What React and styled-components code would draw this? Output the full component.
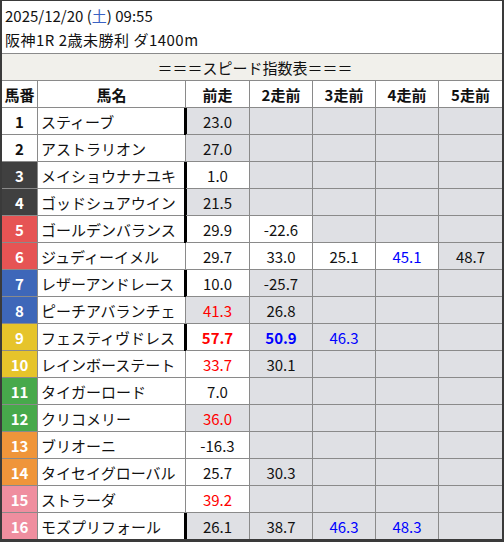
import styled, { createGlobalStyle } from "styled-components"

var GlobalStyle = createGlobalStyle`
  html, body {
    margin: 0;
    padding: 0;
    background: #ffffff;
  }
  body {
    font-family: "Noto Sans CJK JP", "Noto Sans", sans-serif;
    color: #111;
  }
`

var Frame = styled.div`
  width: 504px;
  height: 542px;
  box-sizing: border-box;
  border-style: solid;
  border-color: #3a3a3a;
  border-width: 1px 2px 3px 2px;
  background: #fff;
  overflow: hidden;
`

var Info = styled.div`
  height: 53px;
  box-sizing: border-box;
  border-bottom: 1px solid #8a8a8a;
  padding: 3px 0 0 3px;
  font-size: 15px;
  line-height: 24px;
`

var InfoLine = styled.div`
  letter-spacing: ${(p) => (p.wide ? "0.5px" : "0")};
`

var Sat = styled.span`
  color: #3a62c4;
`

var Title = styled.div`
  height: 27px;
  box-sizing: border-box;
  border-bottom: 1px solid #8a8a8a;
  background: #f1f0eb;
  display: flex;
  align-items: center;
  justify-content: center;
  font-size: 15px;
  padding-left: 6px;
`

var Grid = styled.div`
  display: grid;
  grid-template-columns: 36px 148px 64px 63px 63px 63px 63px;
  grid-auto-rows: 27px;
`

var Cell = styled.div`
  box-sizing: border-box;
  border-right: ${(p) => (p.last ? "none" : "1px solid #8a8a8a")};
  border-bottom: ${(p) => (p.bottom ? "none" : "1px solid #8a8a8a")};
  display: flex;
  align-items: center;
  justify-content: ${(p) => (p.left ? "flex-start" : "center")};
  padding-left: ${(p) => (p.left ? "3px" : "0")};
  font-size: 15px;
  white-space: nowrap;
  overflow: hidden;
`

var Head = styled(Cell)`
  font-weight: 700;
  background: #fff;
`

var Num = styled(Cell)`
  font-weight: 700;
  background: ${(p) => p.bg};
  color: ${(p) => p.fg};
`

var Value = styled(Cell)`
  overflow: visible;
  background: ${(p) => (p.gray ? "#dfe0e4" : "#fff")};
  color: ${(p) => (p.tone === "red" ? "#ff0000" : p.tone === "blue" ? "#0000ff" : "#111")};
  font-weight: ${(p) => (p.bold ? 700 : 400)};
  box-shadow: ${(p) => (p.mark ? "-2px 0 0 #000, inset 1px 0 0 #000" : "none")};
`

var waku = [
  ["#ffffff", "#111"],
  ["#ffffff", "#111"],
  ["#404040", "#fff"],
  ["#404040", "#fff"],
  ["#e65454", "#fff"],
  ["#e65454", "#fff"],
  ["#3e67b9", "#fff"],
  ["#3e67b9", "#fff"],
  ["#e6c42b", "#fff"],
  ["#e6c42b", "#fff"],
  ["#47a94b", "#fff"],
  ["#47a94b", "#fff"],
  ["#ef953a", "#fff"],
  ["#ef953a", "#fff"],
  ["#ef8e9f", "#fff"],
  ["#ef8e9f", "#fff"],
]

// v: value, w: white background, t: text tone, b: bold
var horses = [
  { name: "スティーブ", mark: true, runs: [{ v: "23.0" }] },
  { name: "アストラリオン", runs: [{ v: "27.0" }] },
  { name: "メイショウナナユキ", mark: true, runs: [{ v: "1.0", w: true }] },
  { name: "ゴッドシュアウイン", mark: true, runs: [{ v: "21.5" }] },
  { name: "ゴールデンバランス", mark: true, runs: [{ v: "29.9", w: true }, { v: "-22.6", w: true }] },
  {
    name: "ジュディーイメル",
    runs: [
      { v: "29.7", w: true },
      { v: "33.0", w: true },
      { v: "25.1", w: true },
      { v: "45.1", w: true, t: "blue" },
      { v: "48.7" },
    ],
  },
  { name: "レザーアンドレース", mark: true, runs: [{ v: "10.0", w: true }, { v: "-25.7" }] },
  { name: "ピーチアバランチェ", runs: [{ v: "41.3", t: "red" }, { v: "26.8" }] },
  {
    name: "フェスティヴドレス",
    mark: true,
    runs: [
      { v: "57.7", w: true, t: "red", b: true },
      { v: "50.9", t: "blue", b: true },
      { v: "46.3", t: "blue" },
    ],
  },
  { name: "レインボーステート", runs: [{ v: "33.7", w: true, t: "red" }, { v: "30.1" }] },
  { name: "タイガーロード", runs: [{ v: "7.0", w: true }] },
  { name: "クリコメリー", runs: [{ v: "36.0", t: "red" }] },
  { name: "ブリオーニ", runs: [{ v: "-16.3", w: true }] },
  { name: "タイセイグローバル", runs: [{ v: "25.7", w: true }, { v: "30.3" }] },
  { name: "ストラーダ", runs: [{ v: "39.2", w: true, t: "red" }] },
  {
    name: "モズプリフォール",
    mark: true,
    runs: [{ v: "26.1" }, { v: "38.7" }, { v: "46.3", t: "blue" }, { v: "48.3", t: "blue" }],
  },
]

var heads = ["馬番", "馬名", "前走", "2走前", "3走前", "4走前", "5走前"]

function App() {
  return (
    <>
      <GlobalStyle />
      <Frame>
        <Info>
          <InfoLine>
            2025/12/20 (<Sat>土</Sat>) 09:55
          </InfoLine>
          <InfoLine wide>阪神1R 2歳未勝利 ダ1400m</InfoLine>
        </Info>
        <Title>＝＝＝スピード指数表＝＝＝</Title>
        <Grid>
          {heads.map((h, i) => (
            <Head key={h} last={i === 6}>
              {h}
            </Head>
          ))}
          {horses.map((horse, r) => {
            var bottom = r === horses.length - 1
            var cells = []
            for (var c = 0; c < 5; c++) {
              var run = horse.runs[c]
              cells.push(
                <Value
                  key={c}
                  last={c === 4}
                  bottom={bottom}
                  gray={!run || !run.w}
                  tone={run ? run.t : null}
                  bold={run && run.b}
                  mark={c === 0 && horse.mark}
                >
                  {run ? run.v : ""}
                </Value>
              )
            }
            return [
              <Num key={"n" + r} bottom={bottom} bg={waku[r][0]} fg={waku[r][1]}>
                {r + 1}
              </Num>,
              <Cell key={"h" + r} left bottom={bottom}>
                {horse.name}
              </Cell>,
              ...cells,
            ]
          })}
        </Grid>
      </Frame>
    </>
  )
}

export default App
